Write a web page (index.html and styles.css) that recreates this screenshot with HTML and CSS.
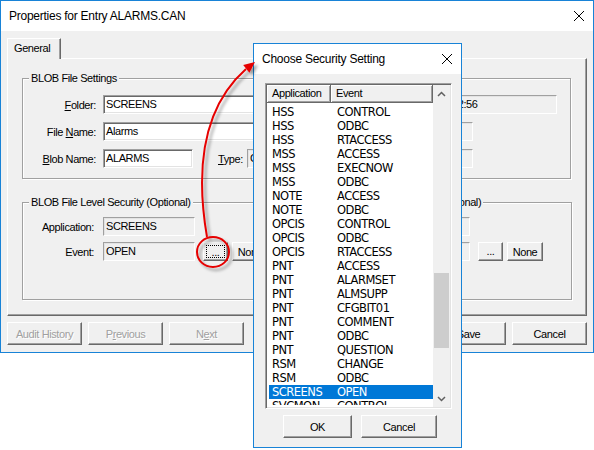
FILE: index.html
```html
<!DOCTYPE html>
<html>
<head>
    <title>Properties for Entry ALARMS.CAN</title>
    <link rel="stylesheet" href="styles.css">
</head>
<body>
    <!-- Main properties window -->
    <div class="window">
        <div class="titlebar">
            <span class="title">Properties for Entry ALARMS.CAN</span>
            <svg class="close" width="10" height="10" viewBox="0 0 10 10"><path d="M0 0L10 10M10 0L0 10" stroke="#000" stroke-width="1"/></svg>
        </div>
        <div class="window-body">
            <div class="tabs">
                <div class="tab active">General</div>
            </div>
            <div class="tab-panel">
                <fieldset class="group settings">
                    <legend>BLOB File Settings</legend>
                    <div class="rows">
                        <div class="row">
                            <span class="lbl"><u>F</u>older:</span>
                            <div class="field w-folder">SCREENS</div>
                            <span class="lbl-side">Last Modified:</span>
                            <div class="field readonly w-modified">11/14/2017 14:02:56</div>
                        </div>
                        <div class="row">
                            <span class="lbl">File <u>N</u>ame:</span>
                            <div class="field w-filename">Alarms</div>
                            <div class="field readonly w-small"></div>
                        </div>
                        <div class="row">
                            <span class="lbl"><u>B</u>lob Name:</span>
                            <div class="field w-blob">ALARMS</div>
                            <span class="lbl-type"><u>T</u>ype:</span>
                            <div class="field readonly w-type">CAN</div>
                            <div class="field readonly w-small"></div>
                        </div>
                    </div>
                </fieldset>

                <div class="security">
                    <fieldset class="group sec-left">
                        <legend>BLOB File Level Security (Optional)</legend>
                        <div class="rows sec-rows">
                            <div class="row">
                                <span class="lbl sec-lbl">Application:</span>
                                <div class="field readonly w-sec">SCREENS</div>
                            </div>
                            <div class="row">
                                <span class="lbl sec-lbl">Event:</span>
                                <div class="field readonly w-sec">OPEN</div>
                                <div class="btn btn-dots focused"><span class="focus-rect">...</span></div>
                                <div class="btn btn-none">None</div>
                            </div>
                        </div>
                    </fieldset>
                    <fieldset class="group sec-right">
                        <legend>BLOB Entry Level Security (Optional)</legend>
                        <div class="rows sec-rows">
                            <div class="row">
                                <span class="lbl sec-lbl">Application:</span>
                                <div class="field readonly w-sec"></div>
                            </div>
                            <div class="row">
                                <span class="lbl sec-lbl">Event:</span>
                                <div class="field readonly w-sec"></div>
                                <div class="btn btn-dots">...</div>
                                <div class="btn btn-none">None</div>
                            </div>
                        </div>
                    </fieldset>
                </div>
            </div>
            <div class="buttons">
                <div class="button-group">
                    <div class="btn btn-wide disabled">Audit History</div>
                    <div class="btn btn-wide disabled">P<u>r</u>evious</div>
                    <div class="btn btn-wide disabled">N<u>e</u>xt</div>
                </div>
                <div class="button-group">
                    <div class="btn btn-wide">Save</div>
                    <div class="btn btn-wide">Cancel</div>
                </div>
            </div>
        </div>
    </div>

    <!-- Modal dialog on top -->
    <div class="dialog">
        <div class="titlebar dlg-titlebar">
            <span class="title">Choose Security Setting</span>
            <svg class="close" width="10" height="10" viewBox="0 0 10 10"><path d="M0 0L10 10M10 0L0 10" stroke="#000" stroke-width="1"/></svg>
        </div>
        <div class="dlg-body">
            <div class="list">
                <div class="list-main">
                    <div class="list-head">
                        <div class="head-cell head-app">Application</div>
                        <div class="head-cell head-event">Event</div>
                    </div>
                    <div class="list-rows">
                        <div class="list-row"><span class="c-app">HSS</span><span>CONTROL</span></div>
                        <div class="list-row"><span class="c-app">HSS</span><span>ODBC</span></div>
                        <div class="list-row"><span class="c-app">HSS</span><span>RTACCESS</span></div>
                        <div class="list-row"><span class="c-app">MSS</span><span>ACCESS</span></div>
                        <div class="list-row"><span class="c-app">MSS</span><span>EXECNOW</span></div>
                        <div class="list-row"><span class="c-app">MSS</span><span>ODBC</span></div>
                        <div class="list-row"><span class="c-app">NOTE</span><span>ACCESS</span></div>
                        <div class="list-row"><span class="c-app">NOTE</span><span>ODBC</span></div>
                        <div class="list-row"><span class="c-app">OPCIS</span><span>CONTROL</span></div>
                        <div class="list-row"><span class="c-app">OPCIS</span><span>ODBC</span></div>
                        <div class="list-row"><span class="c-app">OPCIS</span><span>RTACCESS</span></div>
                        <div class="list-row"><span class="c-app">PNT</span><span>ACCESS</span></div>
                        <div class="list-row"><span class="c-app">PNT</span><span>ALARMSET</span></div>
                        <div class="list-row"><span class="c-app">PNT</span><span>ALMSUPP</span></div>
                        <div class="list-row"><span class="c-app">PNT</span><span>CFGBIT01</span></div>
                        <div class="list-row"><span class="c-app">PNT</span><span>COMMENT</span></div>
                        <div class="list-row"><span class="c-app">PNT</span><span>ODBC</span></div>
                        <div class="list-row"><span class="c-app">PNT</span><span>QUESTION</span></div>
                        <div class="list-row"><span class="c-app">RSM</span><span>CHANGE</span></div>
                        <div class="list-row"><span class="c-app">RSM</span><span>ODBC</span></div>
                        <div class="list-row selected"><span class="c-app">SCREENS</span><span>OPEN</span></div>
                        <div class="list-row"><span class="c-app">SVCMON</span><span>CONTROL</span></div>
                    </div>
                </div>
                <div class="scrollbar">
                    <div class="sb-btn">
                        <svg width="9" height="6" viewBox="0 0 9 6"><path d="M1 5L4.5 1.5L8 5" fill="none" stroke="#606060" stroke-width="1.5"/></svg>
                    </div>
                    <div class="sb-track"><div class="sb-thumb"></div></div>
                    <div class="sb-btn">
                        <svg width="9" height="6" viewBox="0 0 9 6"><path d="M1 1L4.5 4.5L8 1" fill="none" stroke="#606060" stroke-width="1.5"/></svg>
                    </div>
                </div>
            </div>
            <div class="dlg-buttons">
                <div class="btn btn-ok">OK</div>
                <div class="btn btn-cancel">Cancel</div>
            </div>
        </div>
    </div>

    <!-- Red callout: circle on the "..." button, arrow to the dialog -->
    <svg class="callout" width="594" height="450" viewBox="0 0 594 450">
        <defs>
            <filter id="shadow" x="-20%" y="-20%" width="140%" height="140%">
                <feDropShadow dx="3" dy="3" stdDeviation="1.6" flood-color="#000" flood-opacity="0.35"/>
            </filter>
        </defs>
        <g filter="url(#shadow)">
            <ellipse cx="213" cy="252" rx="16" ry="15" fill="none" stroke="#e60000" stroke-width="2"/>
            <path d="M207 237C199 190 194 115 246 69" fill="none" stroke="#e60000" stroke-width="2"/>
            <polygon points="255,62 249.4,72.7 243.2,64.9" fill="#e60000"/>
        </g>
    </svg>
</body>
</html>
```

FILE: styles.css
```css
body {
    margin: 0;
    background: #fff;
    font-family: "Liberation Sans", Arial, sans-serif;
    font-size: 11px;
    letter-spacing: -0.4px;
    color: #000;
}

/* Window frame */
.window {
    width: 594px;
    height: 353px;
    box-sizing: border-box;
    border: 1px solid #1883d7;
    background: #f0f0f0;
}

.titlebar {
    height: 30px;
    background: #fff;
    display: flex;
    align-items: center;
    justify-content: space-between;
    padding: 0 9px 0 8px;
    font-size: 12px;
    letter-spacing: -0.25px;
}

.close {
    display: block;
}

.window-body {
    padding: 7px 6px 0 6px;
}

/* Tabs */
.tabs {
    display: flex;
    height: 20px;
}

.tab {
    width: 54px;
    height: 21px;
    box-sizing: border-box;
    padding: 3px 0 0 6px;
    background: #f0f0f0;
    border-top: 1px solid #fff;
    border-left: 1px solid #fff;
    border-right: 1px solid #696969;
    box-shadow: inset -1px 0 #a0a0a0;
    position: relative;
    z-index: 1;
}

.tab-panel {
    height: 258px;
    box-sizing: border-box;
    border: 1px solid;
    border-color: #fff #696969 #696969 #fff;
    box-shadow: inset -1px -1px #a0a0a0;
    padding: 13px 0 0 14px;
}

/* Group boxes */
.group {
    margin: 0;
    padding: 0;
    min-width: 0;
    box-sizing: border-box;
    border: 1px solid #a0a0a0;
    box-shadow: inset 1px 1px #fff, 1px 1px #fff;
}

.group legend {
    margin-left: 6px;
    padding: 0 2px;
    line-height: 13px;
    background: #f0f0f0;
}

.settings {
    width: 549px;
    height: 107px;
}

.rows {
    display: flex;
    flex-direction: column;
    gap: 8px;
    padding-top: 10px;
}

.row {
    display: flex;
    align-items: center;
    height: 19px;
}

.lbl {
    width: 73px;
    margin-right: 7px;
    text-align: right;
    flex: none;
}

.lbl-side {
    margin-left: auto;
    margin-right: 4px;
}

.lbl-type {
    width: 23px;
    margin-left: 25px;
    margin-right: 6px;
}

/* Edit fields */
.field {
    height: 19px;
    box-sizing: border-box;
    line-height: 17px;
    padding: 0 2px;
    background: #fff;
    border: 1px solid;
    border-color: #a0a0a0 #fff #fff #a0a0a0;
    box-shadow: inset 1px 1px #696969, inset -1px -1px #e3e3e3;
    white-space: nowrap;
    overflow: hidden;
    flex: none;
}

.field.readonly {
    background: #f0f0f0;
    box-shadow: inset 1px 1px #e3e3e3;
}

.w-folder { width: 200px; }
.w-modified { width: 175px; margin-right: 13px; }
.w-filename { width: 228px; }
.w-blob { width: 90px; }
.w-type { width: 80px; }
.w-small { width: 73px; margin-left: auto; margin-right: 97px; }

.security {
    display: flex;
    gap: 6px;
    margin-top: 17px;
}

.sec-left { width: 269px; height: 104px; }
.sec-right { width: 275px; height: 104px; }

.sec-right legend {
    margin-left: 14px;
}

.sec-rows {
    gap: 6px;
    padding-top: 8px;
}

.sec-lbl {
    width: 71px;
    margin-right: 9px;
}

.w-sec { width: 92px; }

/* Push buttons */
.btn {
    height: 23px;
    box-sizing: border-box;
    display: flex;
    align-items: center;
    justify-content: center;
    background: #f0f0f0;
    border: 1px solid;
    border-color: #fff #696969 #696969 #fff;
    box-shadow: inset -1px -1px #a0a0a0;
    flex: none;
}

.btn.disabled {
    color: #a0a0a0;
    text-shadow: 1px 1px #fff;
}

.btn-dots {
    width: 25px;
    height: 19px;
    margin-left: 8px;
    align-items: flex-end;
    padding-bottom: 3px;
}

.focus-rect {
    width: 19px;
    height: 13px;
    box-sizing: border-box;
    border: 1px dotted #000;
    display: flex;
    align-items: flex-end;
    justify-content: center;
    line-height: 9px;
}

.btn-dots.focused {
    padding-bottom: 2px;
}

.btn-none {
    width: 36px;
    height: 19px;
    margin-left: 4px;
}

.buttons {
    display: flex;
    justify-content: space-between;
    margin-top: 6px;
}

.button-group {
    display: flex;
    gap: 6px;
}

.btn-wide {
    width: 75px;
}

/* Dialog */
.dialog {
    position: absolute;
    left: 253px;
    top: 43px;
    width: 209px;
    height: 405px;
    box-sizing: border-box;
    border: 1px solid #1883d7;
    background: #f0f0f0;
}

.dlg-body {
    padding: 9px 9px 0 11px;
}

.list {
    height: 326px;
    box-sizing: border-box;
    display: flex;
    padding: 1px;
    background: #fff;
    border: 1px solid;
    border-color: #a0a0a0 #fff #fff #a0a0a0;
    box-shadow: inset 1px 1px #696969, inset -1px -1px #e3e3e3;
}

.list-main {
    width: 166px;
    overflow: hidden;
}

.list-head {
    display: flex;
    height: 18px;
}

.head-cell {
    box-sizing: border-box;
    height: 18px;
    line-height: 16px;
    padding-left: 5px;
    background: #f0f0f0;
    border-right: 1px solid #696969;
    border-bottom: 1px solid #696969;
    box-shadow: inset 1px 1px #fff, inset -1px -1px #a0a0a0;
}

.head-app { width: 64px; }
.head-event { width: 102px; }

.list-rows {
    margin-top: 2px;
    padding-left: 2px;
    height: 300px;
    overflow: hidden;
    font-family: "DejaVu Sans", sans-serif;
    font-size: 11.5px;
    letter-spacing: -0.5px;
}

.list-row {
    display: flex;
    height: 14px;
    line-height: 14px;
    padding-left: 3px;
    white-space: nowrap;
}

.list-row.selected {
    background: #0078d7;
    color: #fff;
}

.c-app {
    width: 65px;
    flex: none;
}

.scrollbar {
    width: 17px;
    display: flex;
    flex-direction: column;
    background: #f0f0f0;
}

.sb-btn {
    height: 17px;
    display: flex;
    align-items: center;
    justify-content: center;
}

.sb-track {
    flex: 1;
}

.sb-thumb {
    margin: 171px 1px 0;
    height: 75px;
    background: #cdcdcd;
}

.dlg-buttons {
    display: flex;
    gap: 9px;
    margin-top: 6px;
    padding-left: 18px;
}

.btn-ok { width: 69px; }
.btn-cancel { width: 76px; }

/* Annotation overlay */
.callout {
    position: absolute;
    left: 0;
    top: 0;
    pointer-events: none;
}
```
